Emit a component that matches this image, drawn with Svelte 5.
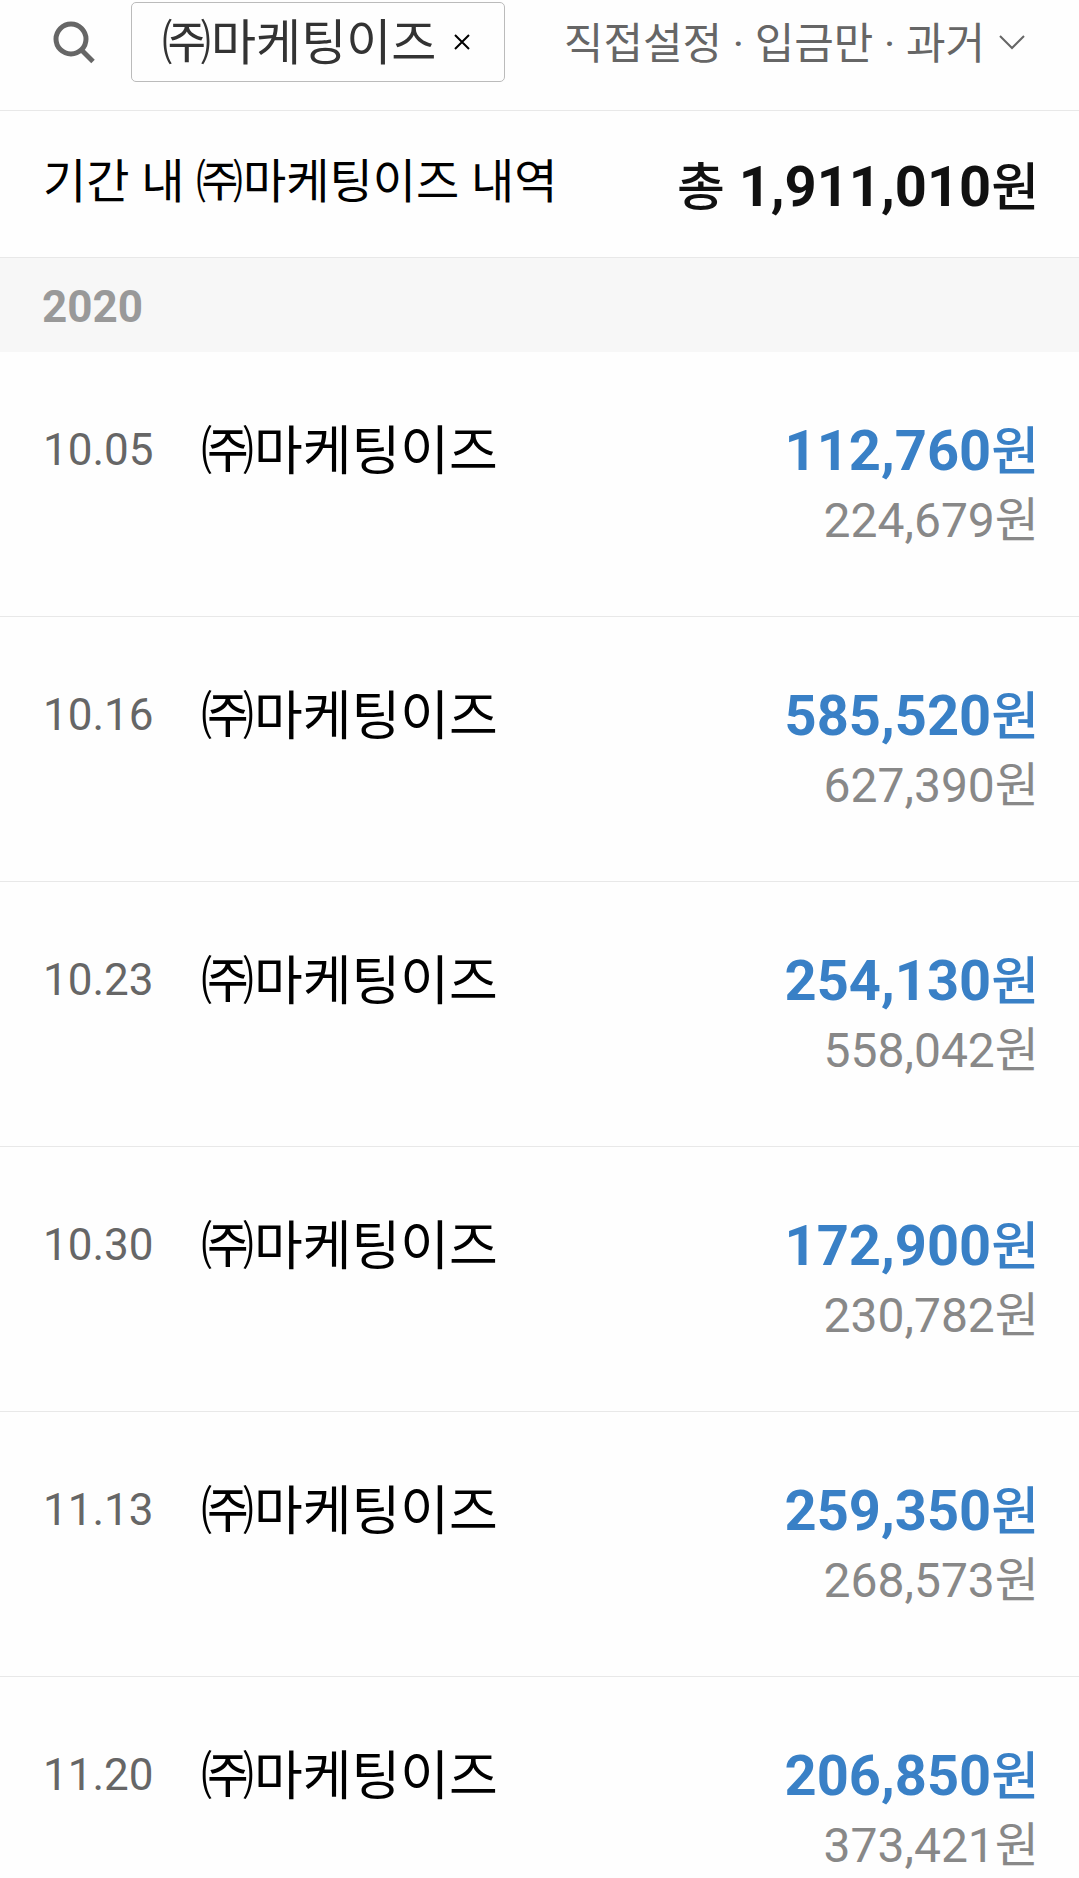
<script>
    let keyword = '㈜마케팅이즈';
    let filters = ['직접설정', '입금만', '과거'];
    let total = 1911010;
    let year = 2020;

    let transactions = [
        { date: '10.05', name: '㈜마케팅이즈', amount: 112760, balance: 224679 },
        { date: '10.16', name: '㈜마케팅이즈', amount: 585520, balance: 627390 },
        { date: '10.23', name: '㈜마케팅이즈', amount: 254130, balance: 558042 },
        { date: '10.30', name: '㈜마케팅이즈', amount: 172900, balance: 230782 },
        { date: '11.13', name: '㈜마케팅이즈', amount: 259350, balance: 268573 },
        { date: '11.20', name: '㈜마케팅이즈', amount: 206850, balance: 373421 }
    ];

    function format(value) {
        return value.toLocaleString('en-US');
    }
</script>

<div class="page">
    <header class="search-bar">
        <button class="search" aria-label="검색">
            <svg width="44" height="44" viewBox="0 0 44 44" fill="none" stroke="#666" stroke-width="5">
                <circle cx="19" cy="19" r="15" />
                <path d="M29 29.5L41 41.5" />
            </svg>
        </button>
        <button class="chip">
            <span>{keyword}</span>
            <svg width="16" height="16" viewBox="0 0 16 16" fill="none" stroke="#000" stroke-width="2">
                <path d="M1 1L15 15M15 1L1 15" />
            </svg>
        </button>
        <button class="filter" aria-haspopup="dialog">
            <span>{filters.join(' · ')}</span>
            <svg width="26" height="16" viewBox="0 0 26 16" fill="none" stroke="#666" stroke-width="2">
                <path d="M1 2L13 14L25 2" />
            </svg>
        </button>
    </header>

    <section class="summary">
        <h1>기간 내 {keyword} 내역</h1>
        <strong><span class="unit">총</span> {format(total)}<span class="unit">원</span></strong>
    </section>

    <h2 class="year">{year}</h2>

    <ul>
        {#each transactions as item}
            <li>
                <span class="date">{item.date}</span>
                <span class="name">{item.name}</span>
                <div class="money">
                    <strong class="amount">{format(item.amount)}<span class="unit">원</span></strong>
                    <span class="balance">{format(item.balance)}원</span>
                </div>
            </li>
        {/each}
    </ul>
</div>

<style>
    :global(body) {
        margin: 0;
        background: #fefefe;
    }

    .page {
        font-family: Roboto, "Noto Sans CJK KR", sans-serif;
        color: #000;
    }

    button {
        padding: 0;
        border: 0;
        background: none;
        font-family: inherit;
        white-space: nowrap;
        cursor: pointer;
    }

    svg {
        display: block;
        flex: none;
    }

    .search-bar {
        display: flex;
        align-items: center;
        box-sizing: border-box;
        height: 111px;
        padding: 2px 54px 28px 52px;
        border-bottom: 1px solid #e8e8e8;
    }

    .search {
        margin-right: 35px;
    }

    .chip {
        display: flex;
        align-items: center;
        gap: 18px;
        height: 80px;
        padding: 0 34px 0 30px;
        border: 1px solid #bbb;
        border-radius: 5px;
        color: #333;
        font-size: 49px;
        line-height: 72px;
        box-sizing: border-box;
    }

    .chip span {
        padding-top: 4px;
    }

    .filter {
        display: flex;
        align-items: center;
        gap: 14px;
        margin-left: auto;
        color: #666;
        font-size: 43px;
        line-height: 64px;
    }

    .filter span {
        padding-top: 4px;
    }

    .summary {
        display: flex;
        justify-content: space-between;
        align-items: center;
        box-sizing: border-box;
        height: 147px;
        padding: 0 40px 0 43px;
        border-bottom: 1px solid #e8e8e8;
    }

    .summary h1 {
        margin: 0;
        padding-bottom: 4px;
        font-size: 47px;
        font-weight: 400;
        line-height: 68px;
    }

    .summary strong {
        padding-top: 6px;
        color: #111;
        font-size: 56px;
        font-weight: 700;
        line-height: 68px;
    }

    .unit {
        font-size: 52px;
        font-weight: 500;
        line-height: 1;
    }

    .year {
        margin: 0;
        padding: 16px 42px 12px;
        background: #f7f7f7;
        color: #999;
        font-size: 44px;
        font-weight: 700;
        line-height: 66px;
    }

    ul {
        margin: 0;
        padding: 0;
        list-style: none;
    }

    li {
        display: flex;
        align-items: flex-start;
        padding: 64px 40px 60px 43px;
        border-bottom: 1px solid #e8e8e8;
    }

    .date {
        width: 158px;
        color: #666;
        font-size: 44px;
        line-height: 68px;
    }

    .name {
        flex: 1;
        font-size: 53px;
        line-height: 72px;
    }

    .money {
        display: flex;
        flex-direction: column;
        align-items: flex-end;
    }

    .amount {
        color: #3980c6;
        font-size: 56px;
        font-weight: 700;
        line-height: 70px;
    }

    .balance {
        color: #888;
        font-size: 48px;
        line-height: 70px;
    }
</style>
